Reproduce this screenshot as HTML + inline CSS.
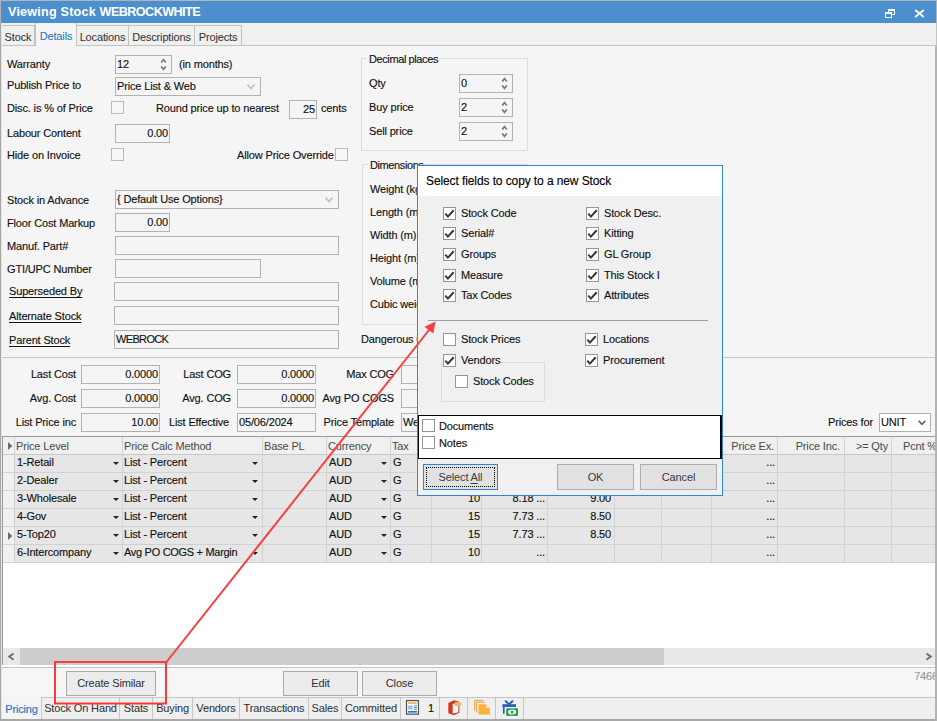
<!DOCTYPE html>
<html><head><meta charset="utf-8"><title>Viewing Stock</title>
<style>
*{box-sizing:border-box;margin:0;padding:0}
html,body{width:937px;height:721px;overflow:hidden;background:#f5f5f5}
body{position:relative;font-family:"Liberation Sans",sans-serif;font-size:11px;color:#111;line-height:13px;letter-spacing:-0.15px;-webkit-text-stroke:0.14px currentColor}
.a{position:absolute;white-space:nowrap}
.t{position:absolute;white-space:nowrap;height:13px;line-height:13px}
.r{text-align:right}
.u{text-decoration:underline;text-underline-offset:2px;text-decoration-thickness:1px}
.in{position:absolute;border:1px solid #b2b2b2;background:#f5f5f5;height:19px;line-height:17px;padding:0 1px;white-space:nowrap;overflow:hidden}
.cb{position:absolute;width:13px;height:13px;border:1px solid #b9b9b9;background:#f7f7f7}
.grp{position:absolute;border:1px solid #dcdcdc}
.grp>span{position:absolute;top:-6px;left:5px;letter-spacing:-0.4px;background:#f5f5f5;padding:0 2px;line-height:13px}
.btn{position:absolute;-webkit-text-stroke:0;border:1px solid #ababab;background:#ececec;color:#2e2e2e;text-align:center;height:25px;line-height:23px}
.dcb{position:absolute;width:13px;height:13px;border:1px solid #959595;background:#fff}
</style></head><body>
<!-- title bar -->
<div class="a" id="title" style="left:0;top:0;width:937px;height:23px;background:#4c8fce;border-top:1px solid #b4b4b4;border-right:1px solid #b4b4b4;border-left:1px solid #b4b4b4"></div>
<div class="a" style="left:8px;top:5px;color:#fff;font-weight:bold;font-size:12.6px;line-height:15px;-webkit-text-stroke:0"><span id="t1" style="letter-spacing:0.21px">Viewing Stock </span><span id="t2" style="letter-spacing:-0.55px">WEBROCKWHITE</span></div>
<svg class="a" style="left:884px;top:8px" width="12" height="11" viewBox="0 0 12 11" shape-rendering="crispEdges"><path d="M4.5 4V1.5H10.5V6.5H8" fill="none" stroke="#fff" stroke-width="1"/><rect x="4" y="1" width="7" height="2" fill="#fff"/><rect x="1.5" y="4.5" width="6" height="5" fill="none" stroke="#fff" stroke-width="1"/><rect x="1" y="4" width="7" height="2" fill="#fff"/></svg>
<svg class="a" style="left:914px;top:9px" width="11" height="9" viewBox="0 0 11 9"><path d="M1.2 1L9.8 8M9.8 1L1.2 8" stroke="#fff" stroke-width="1.7" fill="none"/></svg>
<!-- tab strip -->
<div class="a" style="left:0;top:23px;width:937px;height:23px;background:#f0f0f0;border-bottom:1px solid #c2c2c2;border-right:1px solid #b4b4b4"></div>
<div class="a" style="left:2px;top:25px;width:33px;height:21px;background:#f0f0f0;border:1px solid #c2c2c2;border-left:none;text-align:center;line-height:23px;color:#333;-webkit-text-stroke:0.05px">Stock</div>
<div class="a" style="left:35px;top:23px;width:42px;height:23px;background:#f5f5f5;border:1px solid #c2c2c2;border-bottom:none;border-top:none;text-align:center;line-height:27px;color:#1e73be;-webkit-text-stroke:0.05px">Details</div>
<div class="a" style="left:77px;top:25px;width:52px;height:21px;background:#f0f0f0;border:1px solid #c2c2c2;border-left:none;text-align:center;line-height:23px;color:#333;-webkit-text-stroke:0.05px">Locations</div>
<div class="a" style="left:129px;top:25px;width:66px;height:21px;background:#f0f0f0;border:1px solid #c2c2c2;border-left:none;text-align:center;line-height:23px;color:#333;-webkit-text-stroke:0.05px">Descriptions</div>
<div class="a" style="left:195px;top:25px;width:47px;height:21px;background:#f0f0f0;border:1px solid #c2c2c2;border-left:none;text-align:center;line-height:23px;color:#333;-webkit-text-stroke:0.05px">Projects</div>
<div class="a" style="left:0;top:23px;width:2px;height:698px;background:#e4e4e4;border-left:1px solid #a6a6a6"></div>
<div class="a" style="left:936px;top:23px;width:1px;height:698px;background:#c4c4c4"></div>
<div class="t " style="left:7px;top:58px;">Warranty</div>
<div class="t " style="left:7px;top:79px;">Publish Price to</div>
<div class="t " style="left:7px;top:102px;">Disc. is % of Price</div>
<div class="t " style="left:7px;top:127px;">Labour Content</div>
<div class="t " style="left:7px;top:149px;">Hide on Invoice</div>
<div class="t " style="left:7px;top:194px;">Stock in Advance</div>
<div class="t " style="left:7px;top:217px;">Floor Cost Markup</div>
<div class="t " style="left:7px;top:240px;">Manuf. Part#</div>
<div class="t " style="left:7px;top:263px;">GTI/UPC Number</div>
<div class="t u" style="left:9px;top:285px;">Superseded By</div>
<div class="t u" style="left:9px;top:310px;">Alternate Stock</div>
<div class="t u" style="left:9px;top:334px;">Parent Stock</div>
<div class="in " style="left:115px;top:55px;width:57px;height:19px;line-height:17px;">12<svg class="a" style="right:4px;top:2px" width="7" height="13" viewBox="0 0 7 13"><path d="M1.2 4.6L3.5 1.6L5.8 4.6M1.2 8.4L3.5 11.4L5.8 8.4" fill="none" stroke="#787878" stroke-width="1.7"/></svg></div>
<div class="t " style="left:179px;top:58px;">(in months)</div>
<div class="in " style="left:115px;top:77px;width:146px;height:19px;line-height:17px;">Price List &amp; Web<svg class="a" style="right:5px;top:6px" width="8" height="6" viewBox="0 0 8 6"><path d="M0.6 0.6L4 4.6L7.4 0.6" fill="none" stroke="#c2c2c2" stroke-width="1.8"/></svg></div>
<div class="cb" style="left:111px;top:101px"></div>
<div class="t " style="left:156px;top:102px;">Round price up to nearest</div>
<div class="in " style="left:289px;top:100px;width:28px;height:19px;line-height:17px;text-align:right">25</div>
<div class="t " style="left:321px;top:102px;">cents</div>
<div class="in " style="left:115px;top:124px;width:55px;height:19px;line-height:17px;text-align:right">0.00</div>
<div class="cb" style="left:111px;top:148px"></div>
<div class="t " style="left:237px;top:149px;">Allow Price Override</div>
<div class="cb" style="left:335px;top:148px"></div>
<div class="in " style="left:115px;top:190px;width:224px;height:19px;line-height:17px;">{ Default Use Options}<svg class="a" style="right:5px;top:6px" width="8" height="6" viewBox="0 0 8 6"><path d="M0.6 0.6L4 4.6L7.4 0.6" fill="none" stroke="#c2c2c2" stroke-width="1.8"/></svg></div>
<div class="in " style="left:115px;top:213px;width:55px;height:19px;line-height:17px;text-align:right">0.00</div>
<div class="in " style="left:115px;top:236px;width:224px;height:19px;line-height:17px;"></div>
<div class="in " style="left:115px;top:259px;width:146px;height:19px;line-height:17px;"></div>
<div class="in " style="left:114px;top:282px;width:225px;height:19px;line-height:17px;"></div>
<div class="in " style="left:114px;top:306px;width:225px;height:19px;line-height:17px;"></div>
<div class="in " style="left:114px;top:330px;width:225px;height:19px;line-height:17px;letter-spacing:-0.65px">WEBROCK</div>
<div class="grp" style="left:361px;top:58px;width:167px;height:93px"><span>Decimal places</span></div>
<div class="t " style="left:369px;top:77px;">Qty</div>
<div class="in " style="left:459px;top:74px;width:54px;height:19px;line-height:17px;">0<svg class="a" style="right:4px;top:2px" width="7" height="13" viewBox="0 0 7 13"><path d="M1.2 4.6L3.5 1.6L5.8 4.6M1.2 8.4L3.5 11.4L5.8 8.4" fill="none" stroke="#787878" stroke-width="1.7"/></svg></div>
<div class="t " style="left:369px;top:101px;">Buy price</div>
<div class="in " style="left:459px;top:98px;width:54px;height:19px;line-height:17px;">2<svg class="a" style="right:4px;top:2px" width="7" height="13" viewBox="0 0 7 13"><path d="M1.2 4.6L3.5 1.6L5.8 4.6M1.2 8.4L3.5 11.4L5.8 8.4" fill="none" stroke="#787878" stroke-width="1.7"/></svg></div>
<div class="t " style="left:369px;top:125px;">Sell price</div>
<div class="in " style="left:459px;top:122px;width:54px;height:19px;line-height:17px;">2<svg class="a" style="right:4px;top:2px" width="7" height="13" viewBox="0 0 7 13"><path d="M1.2 4.6L3.5 1.6L5.8 4.6M1.2 8.4L3.5 11.4L5.8 8.4" fill="none" stroke="#787878" stroke-width="1.7"/></svg></div>
<div class="grp" style="left:362px;top:164px;width:166px;height:161px"><span>Dimensions</span></div>
<div class="t " style="left:370px;top:183px;">Weight (kg)</div>
<div class="t " style="left:370px;top:206px;">Length (m)</div>
<div class="t " style="left:370px;top:229px;">Width (m)</div>
<div class="t " style="left:370px;top:252px;">Height (m)</div>
<div class="t " style="left:370px;top:275px;">Volume (m3)</div>
<div class="t " style="left:370px;top:298px;">Cubic weight</div>
<div class="t " style="left:361px;top:333px;">Dangerous Goods</div>
<div class="a" style="left:2px;top:357px;width:935px;height:1px;background:#c6c6c6"></div>
<div class="a" style="left:2px;top:358px;width:935px;height:79px;background:#f5f5f5"></div>
<div class="t r " style="right:861px;top:368px;">Last Cost</div>
<div class="in " style="left:81px;top:365px;width:79px;height:19px;line-height:17px;text-align:right">0.0000</div>
<div class="t r " style="right:861px;top:392px;">Avg. Cost</div>
<div class="in " style="left:81px;top:389px;width:79px;height:19px;line-height:17px;text-align:right">0.0000</div>
<div class="t r " style="right:861px;top:416px;">List Price inc</div>
<div class="in " style="left:81px;top:413px;width:79px;height:19px;line-height:17px;text-align:right">10.00</div>
<div class="t r " style="right:706px;top:368px;">Last COG</div>
<div class="in " style="left:237px;top:365px;width:79px;height:19px;line-height:17px;text-align:right">0.0000</div>
<div class="t r " style="right:706px;top:392px;">Avg. COG</div>
<div class="in " style="left:237px;top:389px;width:79px;height:19px;line-height:17px;text-align:right">0.0000</div>
<div class="t " style="left:169px;top:416px;">List Effective</div>
<div class="in " style="left:237px;top:413px;width:79px;height:19px;line-height:17px;">05/06/2024</div>
<div class="t r " style="right:543px;top:368px;">Max COG</div>
<div class="in " style="left:401px;top:365px;width:79px;height:19px;line-height:17px;"></div>
<div class="t r " style="right:543px;top:392px;">Avg PO COGS</div>
<div class="in " style="left:401px;top:389px;width:79px;height:19px;line-height:17px;"></div>
<div class="t r " style="right:543px;top:416px;">Price Template</div>
<div class="in " style="left:401px;top:413px;width:79px;height:19px;line-height:17px;">We</div>
<div class="t " style="left:828px;top:416px;">Prices for</div>
<div class="in " style="left:879px;top:413px;width:52px;height:19px;line-height:17px;background:#fff">UNIT<svg class="a" style="right:4px;top:6px" width="8" height="6" viewBox="0 0 8 6"><path d="M0.7 0.7L4 4.3L7.3 0.7" fill="none" stroke="#606060" stroke-width="1.7"/></svg></div><div class="a" style="left:2px;top:436px;width:935px;height:229px;background:#fff;border-left:1px solid #9a9a9a;border-top:1px solid #9a9a9a"></div>
<div class="a" style="left:3px;top:437px;width:934px;height:18px;background:#f0f0f0;border-bottom:1px solid #c8c8c8"></div>
<div class="a" style="left:3px;top:455px;width:934px;height:108px;background:#e6e6e6"></div>
<div class="a" style="left:3px;top:455px;width:11px;height:108px;background:#f0f0f0"></div>
<div class="a" style="left:3px;top:472px;width:934px;height:1px;background:#d2d2d2"></div>
<div class="a" style="left:3px;top:490px;width:934px;height:1px;background:#d2d2d2"></div>
<div class="a" style="left:3px;top:508px;width:934px;height:1px;background:#d2d2d2"></div>
<div class="a" style="left:3px;top:526px;width:934px;height:1px;background:#d2d2d2"></div>
<div class="a" style="left:3px;top:544px;width:934px;height:1px;background:#d2d2d2"></div>
<div class="a" style="left:3px;top:562px;width:934px;height:1px;background:#d2d2d2"></div>
<div class="a" style="left:14px;top:437px;width:1px;height:126px;background:#d2d2d2"></div>
<div class="a" style="left:122px;top:437px;width:1px;height:126px;background:#d2d2d2"></div>
<div class="a" style="left:262px;top:437px;width:1px;height:126px;background:#d2d2d2"></div>
<div class="a" style="left:326px;top:437px;width:1px;height:126px;background:#d2d2d2"></div>
<div class="a" style="left:390px;top:437px;width:1px;height:126px;background:#d2d2d2"></div>
<div class="a" style="left:431px;top:437px;width:1px;height:126px;background:#d2d2d2"></div>
<div class="a" style="left:481px;top:437px;width:1px;height:126px;background:#d2d2d2"></div>
<div class="a" style="left:547px;top:437px;width:1px;height:126px;background:#d2d2d2"></div>
<div class="a" style="left:614px;top:437px;width:1px;height:126px;background:#d2d2d2"></div>
<div class="a" style="left:661px;top:437px;width:1px;height:126px;background:#d2d2d2"></div>
<div class="a" style="left:711px;top:437px;width:1px;height:126px;background:#d2d2d2"></div>
<div class="a" style="left:777px;top:437px;width:1px;height:126px;background:#d2d2d2"></div>
<div class="a" style="left:844px;top:437px;width:1px;height:126px;background:#d2d2d2"></div>
<div class="a" style="left:891px;top:437px;width:1px;height:126px;background:#d2d2d2"></div>
<div class="t " style="left:16px;top:440px;color:#484848;-webkit-text-stroke:0">Price Level</div>
<div class="t " style="left:124px;top:440px;color:#484848;-webkit-text-stroke:0">Price Calc Method</div>
<div class="t " style="left:264px;top:440px;color:#484848;-webkit-text-stroke:0">Base PL</div>
<div class="t " style="left:328px;top:440px;color:#484848;-webkit-text-stroke:0">Currency</div>
<div class="t " style="left:392px;top:440px;color:#484848;-webkit-text-stroke:0">Tax</div>
<div class="t r " style="right:163px;top:440px;color:#484848;-webkit-text-stroke:0">Price Ex.</div>
<div class="t r " style="right:97px;top:440px;color:#484848;-webkit-text-stroke:0">Price Inc.</div>
<div class="t r " style="right:49px;top:440px;color:#484848;-webkit-text-stroke:0">&gt;= Qty</div>
<div class="t r " style="right:0px;top:440px;color:#484848;-webkit-text-stroke:0">Pcnt %</div>
<svg class="a" style="left:8px;top:442px" width="5" height="8" viewBox="0 0 5 8"><path d="M0 0L4.3 4L0 8Z" fill="#6a6a6a"/></svg>
<svg class="a" style="left:8px;top:532px" width="5" height="8" viewBox="0 0 5 8"><path d="M0 0L4.3 4L0 8Z" fill="#6a6a6a"/></svg>
<div class="t " style="left:17px;top:456px;">1-Retail</div>
<div class="t " style="left:124px;top:456px;">List - Percent</div>
<div class="t " style="left:329px;top:456px;">AUD</div>
<div class="t " style="left:393px;top:456px;">G</div>
<svg class="a" style="left:113px;top:462px" width="6" height="3" viewBox="0 0 6 3"><path d="M0 0H6L3 3Z" fill="#222"/></svg>
<svg class="a" style="left:252px;top:462px" width="6" height="3" viewBox="0 0 6 3"><path d="M0 0H6L3 3Z" fill="#222"/></svg>
<svg class="a" style="left:381px;top:462px" width="6" height="3" viewBox="0 0 6 3"><path d="M0 0H6L3 3Z" fill="#222"/></svg>
<div class="t r " style="right:162px;top:456px;">...</div>
<div class="t " style="left:17px;top:474px;">2-Dealer</div>
<div class="t " style="left:124px;top:474px;">List - Percent</div>
<div class="t " style="left:329px;top:474px;">AUD</div>
<div class="t " style="left:393px;top:474px;">G</div>
<svg class="a" style="left:113px;top:480px" width="6" height="3" viewBox="0 0 6 3"><path d="M0 0H6L3 3Z" fill="#222"/></svg>
<svg class="a" style="left:252px;top:480px" width="6" height="3" viewBox="0 0 6 3"><path d="M0 0H6L3 3Z" fill="#222"/></svg>
<svg class="a" style="left:381px;top:480px" width="6" height="3" viewBox="0 0 6 3"><path d="M0 0H6L3 3Z" fill="#222"/></svg>
<div class="t r " style="right:162px;top:474px;">...</div>
<div class="t " style="left:17px;top:492px;">3-Wholesale</div>
<div class="t " style="left:124px;top:492px;">List - Percent</div>
<div class="t " style="left:329px;top:492px;">AUD</div>
<div class="t " style="left:393px;top:492px;">G</div>
<svg class="a" style="left:113px;top:498px" width="6" height="3" viewBox="0 0 6 3"><path d="M0 0H6L3 3Z" fill="#222"/></svg>
<svg class="a" style="left:252px;top:498px" width="6" height="3" viewBox="0 0 6 3"><path d="M0 0H6L3 3Z" fill="#222"/></svg>
<svg class="a" style="left:381px;top:498px" width="6" height="3" viewBox="0 0 6 3"><path d="M0 0H6L3 3Z" fill="#222"/></svg>
<div class="t r " style="right:457px;top:492px;">10</div>
<div class="t r " style="right:392px;top:492px;">8.18 ...</div>
<div class="t r " style="right:326px;top:492px;">9.00</div>
<div class="t r " style="right:162px;top:492px;">...</div>
<div class="t " style="left:17px;top:510px;">4-Gov</div>
<div class="t " style="left:124px;top:510px;">List - Percent</div>
<div class="t " style="left:329px;top:510px;">AUD</div>
<div class="t " style="left:393px;top:510px;">G</div>
<svg class="a" style="left:113px;top:516px" width="6" height="3" viewBox="0 0 6 3"><path d="M0 0H6L3 3Z" fill="#222"/></svg>
<svg class="a" style="left:252px;top:516px" width="6" height="3" viewBox="0 0 6 3"><path d="M0 0H6L3 3Z" fill="#222"/></svg>
<svg class="a" style="left:381px;top:516px" width="6" height="3" viewBox="0 0 6 3"><path d="M0 0H6L3 3Z" fill="#222"/></svg>
<div class="t r " style="right:457px;top:510px;">15</div>
<div class="t r " style="right:392px;top:510px;">7.73 ...</div>
<div class="t r " style="right:326px;top:510px;">8.50</div>
<div class="t r " style="right:162px;top:510px;">...</div>
<div class="t " style="left:17px;top:528px;">5-Top20</div>
<div class="t " style="left:124px;top:528px;">List - Percent</div>
<div class="t " style="left:329px;top:528px;">AUD</div>
<div class="t " style="left:393px;top:528px;">G</div>
<svg class="a" style="left:113px;top:534px" width="6" height="3" viewBox="0 0 6 3"><path d="M0 0H6L3 3Z" fill="#222"/></svg>
<svg class="a" style="left:252px;top:534px" width="6" height="3" viewBox="0 0 6 3"><path d="M0 0H6L3 3Z" fill="#222"/></svg>
<svg class="a" style="left:381px;top:534px" width="6" height="3" viewBox="0 0 6 3"><path d="M0 0H6L3 3Z" fill="#222"/></svg>
<div class="t r " style="right:457px;top:528px;">15</div>
<div class="t r " style="right:392px;top:528px;">7.73 ...</div>
<div class="t r " style="right:326px;top:528px;">8.50</div>
<div class="t r " style="right:162px;top:528px;">...</div>
<div class="t " style="left:17px;top:546px;">6-Intercompany</div>
<div class="t " style="left:124px;top:546px;letter-spacing:-0.3px">Avg PO COGS + Margin</div>
<div class="t " style="left:329px;top:546px;">AUD</div>
<div class="t " style="left:393px;top:546px;">G</div>
<svg class="a" style="left:113px;top:552px" width="6" height="3" viewBox="0 0 6 3"><path d="M0 0H6L3 3Z" fill="#222"/></svg>
<svg class="a" style="left:252px;top:552px" width="6" height="3" viewBox="0 0 6 3"><path d="M0 0H6L3 3Z" fill="#222"/></svg>
<svg class="a" style="left:381px;top:552px" width="6" height="3" viewBox="0 0 6 3"><path d="M0 0H6L3 3Z" fill="#222"/></svg>
<div class="t r " style="right:457px;top:546px;">10</div>
<div class="t r " style="right:392px;top:546px;">...</div>
<div class="t r " style="right:162px;top:546px;">...</div>
<div class="a" style="left:3px;top:648px;width:934px;height:17px;background:#e9e9e9"></div>
<div class="a" style="left:20px;top:648px;width:644px;height:17px;background:#cdcdcd"></div>
<svg class="a" style="left:7px;top:652px" width="8" height="9" viewBox="0 0 8 9"><path d="M6.6 1.5L2.2 4.6L6.6 7.7" fill="none" stroke="#707070" stroke-width="1.9"/></svg>
<svg class="a" style="left:925px;top:652px" width="8" height="9" viewBox="0 0 8 9"><path d="M1.4 1.5L5.8 4.6L1.4 7.7" fill="none" stroke="#707070" stroke-width="1.9"/></svg>
<div class="a" style="left:2px;top:665px;width:935px;height:3px;background:#fff;border-bottom:1px solid #c2c2c2"></div>
<div class="a" style="left:2px;top:668px;width:934px;height:30px;background:#f6f6f6"></div>
<div class="btn" style="left:66px;top:671px;width:90px">Create Similar</div>
<div class="btn" style="left:283px;top:671px;width:75px">Edit</div>
<div class="btn" style="left:362px;top:671px;width:75px">Close</div>
<div class="t r " style="right:-1px;top:670px;color:#9a9a9a">7466</div>
<div class="a" style="left:2px;top:697px;width:935px;height:22px;background:#efefef;border-top:1px solid #c6c6c6"></div>
<div class="a" style="left:0px;top:719px;width:937px;height:2px;background:#a8a8a8"></div>
<div class="a" style="left:2px;top:697px;width:40px;height:22px;background:#f5f5f5;border-right:1px solid #c6c6c6;text-align:center;line-height:25px;color:#1e73be">Pricing</div>
<div class="a" style="left:42px;top:697px;width:78px;height:22px;background:#efefef;border:1px solid #c6c6c6;border-left:none;border-bottom:none;text-align:center;line-height:21px;color:#333;-webkit-text-stroke:0.05px">Stock On Hand</div>
<div class="a" style="left:120px;top:697px;width:33px;height:22px;background:#efefef;border:1px solid #c6c6c6;border-left:none;border-bottom:none;text-align:center;line-height:21px;color:#333;-webkit-text-stroke:0.05px">Stats</div>
<div class="a" style="left:153px;top:697px;width:40px;height:22px;background:#efefef;border:1px solid #c6c6c6;border-left:none;border-bottom:none;text-align:center;line-height:21px;color:#333;-webkit-text-stroke:0.05px">Buying</div>
<div class="a" style="left:193px;top:697px;width:47px;height:22px;background:#efefef;border:1px solid #c6c6c6;border-left:none;border-bottom:none;text-align:center;line-height:21px;color:#333;-webkit-text-stroke:0.05px">Vendors</div>
<div class="a" style="left:240px;top:697px;width:69px;height:22px;background:#efefef;border:1px solid #c6c6c6;border-left:none;border-bottom:none;text-align:center;line-height:21px;color:#333;-webkit-text-stroke:0.05px">Transactions</div>
<div class="a" style="left:309px;top:697px;width:33px;height:22px;background:#efefef;border:1px solid #c6c6c6;border-left:none;border-bottom:none;text-align:center;line-height:21px;color:#333;-webkit-text-stroke:0.05px">Sales</div>
<div class="a" style="left:342px;top:697px;width:59px;height:22px;background:#efefef;border:1px solid #c6c6c6;border-left:none;border-bottom:none;text-align:center;line-height:21px;color:#333;-webkit-text-stroke:0.05px">Committed</div>
<div class="a" style="left:401px;top:697px;width:39px;height:22px;background:#efefef;border:1px solid #c6c6c6;border-left:none;border-bottom:none;text-align:center;line-height:21px;color:#333;-webkit-text-stroke:0.05px"></div>
<div class="a" style="left:440px;top:697px;width:28px;height:22px;background:#efefef;border:1px solid #c6c6c6;border-left:none;border-bottom:none;text-align:center;line-height:21px;color:#333;-webkit-text-stroke:0.05px"></div>
<div class="a" style="left:468px;top:697px;width:28px;height:22px;background:#efefef;border:1px solid #c6c6c6;border-left:none;border-bottom:none;text-align:center;line-height:21px;color:#333;-webkit-text-stroke:0.05px"></div>
<div class="a" style="left:496px;top:697px;width:28px;height:22px;background:#efefef;border:1px solid #c6c6c6;border-left:none;border-bottom:none;text-align:center;line-height:21px;color:#333;-webkit-text-stroke:0.05px"></div>
<svg class="a" style="left:400px;top:695px" width="130" height="26" viewBox="0 0 937 187">
<rect x="47" y="40" width="86" height="98" fill="#fff" stroke="#555" stroke-width="9"/>
<rect x="58" y="52" width="64" height="11" fill="#f2a83a"/>
<rect x="58" y="75" width="34" height="30" fill="#8ccaf5"/>
<rect x="100" y="75" width="22" height="6" fill="#666"/><rect x="100" y="87" width="22" height="6" fill="#666"/><rect x="100" y="99" width="22" height="6" fill="#666"/>
<rect x="58" y="115" width="64" height="12" fill="#2a6fd4"/>
<path d="M348 58L388 38L428 48L428 128L388 146L348 132Z" fill="#d63a1e"/>
<path d="M380 64L420 56L420 124L380 134Z" fill="#fff"/>
<rect x="392" y="50" width="48" height="30" rx="12" fill="#e8b476"/>
<path d="M538 40H600M538 40V112M552 52H612M552 52V126" stroke="#e9a030" stroke-width="7" fill="none"/>
<path d="M566 66H620L648 94V140H566Z" fill="#fbb040"/>
<path d="M620 66V94H648Z" fill="#fff" opacity="0.55"/>
<path d="M738 66H836V86H738Z" fill="#1e5fc0"/>
<path d="M742 86H754V135H742Z" fill="#1e5fc0"/>
<path d="M786 66C760 30 740 40 786 66C832 40 812 30 786 66" fill="none" stroke="#1e5fc0" stroke-width="9"/>
<rect x="766" y="96" width="84" height="54" fill="#1a9a4a"/>
<ellipse cx="808" cy="123" rx="30" ry="18" fill="#e9f7ee"/>
<circle cx="808" cy="123" r="10" fill="#1a9a4a"/>
</svg>
<div class="t " style="left:428px;top:702px;">1</div><div class="a" style="left:417px;top:165px;width:306px;height:331px;background:#f0f0f0;border:1px solid #2f86d6"></div>
<div class="a" style="left:418px;top:166px;width:304px;height:30px;background:#fff"></div>
<div class="a" style="left:426px;top:174px;font-size:12px;line-height:15px;color:#000;letter-spacing:-0.1px">Select fields to copy to a new Stock</div>
<div class="dcb" style="left:443px;top:207px"><svg width="11" height="11" viewBox="0 0 11 11" style="position:absolute;left:0;top:0"><path d="M1.3 5.7L3.9 8.6L9.7 2.3" fill="none" stroke="#363636" stroke-width="2"/></svg></div>
<div class="t " style="left:461px;top:207px;">Stock Code</div>
<div class="dcb" style="left:586px;top:207px"><svg width="11" height="11" viewBox="0 0 11 11" style="position:absolute;left:0;top:0"><path d="M1.3 5.7L3.9 8.6L9.7 2.3" fill="none" stroke="#363636" stroke-width="2"/></svg></div>
<div class="t " style="left:604px;top:207px;">Stock Desc.</div>
<div class="dcb" style="left:443px;top:227px"><svg width="11" height="11" viewBox="0 0 11 11" style="position:absolute;left:0;top:0"><path d="M1.3 5.7L3.9 8.6L9.7 2.3" fill="none" stroke="#363636" stroke-width="2"/></svg></div>
<div class="t " style="left:461px;top:227px;">Serial#</div>
<div class="dcb" style="left:586px;top:227px"><svg width="11" height="11" viewBox="0 0 11 11" style="position:absolute;left:0;top:0"><path d="M1.3 5.7L3.9 8.6L9.7 2.3" fill="none" stroke="#363636" stroke-width="2"/></svg></div>
<div class="t " style="left:604px;top:227px;">Kitting</div>
<div class="dcb" style="left:443px;top:248px"><svg width="11" height="11" viewBox="0 0 11 11" style="position:absolute;left:0;top:0"><path d="M1.3 5.7L3.9 8.6L9.7 2.3" fill="none" stroke="#363636" stroke-width="2"/></svg></div>
<div class="t " style="left:461px;top:248px;">Groups</div>
<div class="dcb" style="left:586px;top:248px"><svg width="11" height="11" viewBox="0 0 11 11" style="position:absolute;left:0;top:0"><path d="M1.3 5.7L3.9 8.6L9.7 2.3" fill="none" stroke="#363636" stroke-width="2"/></svg></div>
<div class="t " style="left:604px;top:248px;">GL Group</div>
<div class="dcb" style="left:443px;top:269px"><svg width="11" height="11" viewBox="0 0 11 11" style="position:absolute;left:0;top:0"><path d="M1.3 5.7L3.9 8.6L9.7 2.3" fill="none" stroke="#363636" stroke-width="2"/></svg></div>
<div class="t " style="left:461px;top:269px;">Measure</div>
<div class="dcb" style="left:586px;top:269px"><svg width="11" height="11" viewBox="0 0 11 11" style="position:absolute;left:0;top:0"><path d="M1.3 5.7L3.9 8.6L9.7 2.3" fill="none" stroke="#363636" stroke-width="2"/></svg></div>
<div class="t " style="left:604px;top:269px;">This Stock I</div>
<div class="dcb" style="left:443px;top:289px"><svg width="11" height="11" viewBox="0 0 11 11" style="position:absolute;left:0;top:0"><path d="M1.3 5.7L3.9 8.6L9.7 2.3" fill="none" stroke="#363636" stroke-width="2"/></svg></div>
<div class="t " style="left:461px;top:289px;">Tax Codes</div>
<div class="dcb" style="left:586px;top:289px"><svg width="11" height="11" viewBox="0 0 11 11" style="position:absolute;left:0;top:0"><path d="M1.3 5.7L3.9 8.6L9.7 2.3" fill="none" stroke="#363636" stroke-width="2"/></svg></div>
<div class="t " style="left:604px;top:289px;">Attributes</div>
<div class="a" style="left:428px;top:320px;width:280px;height:1px;background:#a0a0a0"></div>
<div class="a" style="left:441px;top:362px;width:104px;height:40px;border:1px solid #dcdcdc"></div>
<div class="a" style="left:442px;top:353px;width:58px;height:15px;background:#f0f0f0"></div>
<div class="dcb" style="left:443px;top:333px"></div>
<div class="t " style="left:461px;top:333px;">Stock Prices</div>
<div class="dcb" style="left:585px;top:333px"><svg width="11" height="11" viewBox="0 0 11 11" style="position:absolute;left:0;top:0"><path d="M1.3 5.7L3.9 8.6L9.7 2.3" fill="none" stroke="#363636" stroke-width="2"/></svg></div>
<div class="t " style="left:603px;top:333px;">Locations</div>
<div class="dcb" style="left:443px;top:354px"><svg width="11" height="11" viewBox="0 0 11 11" style="position:absolute;left:0;top:0"><path d="M1.3 5.7L3.9 8.6L9.7 2.3" fill="none" stroke="#363636" stroke-width="2"/></svg></div>
<div class="t " style="left:461px;top:354px;">Vendors</div>
<div class="dcb" style="left:585px;top:354px"><svg width="11" height="11" viewBox="0 0 11 11" style="position:absolute;left:0;top:0"><path d="M1.3 5.7L3.9 8.6L9.7 2.3" fill="none" stroke="#363636" stroke-width="2"/></svg></div>
<div class="t " style="left:603px;top:354px;">Procurement</div>
<div class="dcb" style="left:455px;top:375px"></div>
<div class="t " style="left:473px;top:375px;">Stock Codes</div>
<div class="a" style="left:418px;top:415px;width:304px;height:44px;background:#fff;border:1px solid #000;border-right-width:2px"></div>
<div class="dcb" style="left:422px;top:419px"></div>
<div class="t " style="left:439px;top:420px;">Documents</div>
<div class="dcb" style="left:422px;top:436px"></div>
<div class="t " style="left:439px;top:437px;">Notes</div>
<div class="btn" style="left:423px;top:464px;width:75px;height:26px;line-height:24px;background:#e1e1e1;border:1px solid #2f86d6;color:#3a3a3a">Select <span class="u">A</span>ll</div>
<div class="a" style="left:426px;top:467px;width:69px;height:20px;border:1px dotted #000"></div>
<div class="btn" style="left:557px;top:464px;width:77px;height:26px;line-height:24px;background:#e1e1e1;border-color:#adadad;color:#3a3a3a">OK</div>
<div class="btn" style="left:640px;top:464px;width:77px;height:26px;line-height:24px;background:#e1e1e1;border-color:#adadad;color:#3a3a3a">Cancel</div>
<svg class="a" style="left:0;top:0" width="937" height="721" viewBox="0 0 937 721"><rect x="55" y="662" width="111" height="41.5" fill="none" stroke="#f73a3a" stroke-width="2"/><path d="M166.5 662L431 327.5" stroke="#f73f3f" stroke-width="2" fill="none"/><path d="M435.5 321.5L424.4 326.8L433.3 333.6Z" fill="#f73f3f"/></svg>
<div class="a" style="left:935px;top:46px;width:2px;height:675px;background:#b4b4b4"></div></body></html>
